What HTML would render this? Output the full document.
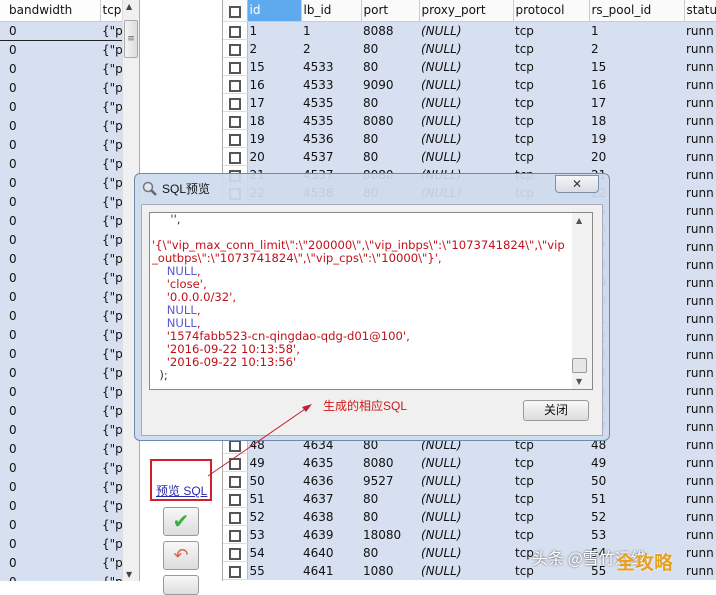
<!DOCTYPE html>
<html><head><meta charset="utf-8"><style>
*{margin:0;padding:0;box-sizing:border-box}
body{width:716px;height:581px;overflow:hidden;background:#fff;position:relative;font-family:"DejaVu Sans","Liberation Sans","Noto Sans CJK SC",sans-serif;font-size:12px;color:#111}
.abs{position:absolute}
table{border-collapse:collapse;table-layout:fixed}
td{height:18px;line-height:18px;white-space:nowrap;overflow:hidden;padding-left:2px}
#left{left:0;top:0;width:140px;height:581px;border-right:1px solid #aaa;overflow:hidden}
#left td{background:#d6e0f1;border-bottom:1px solid #d6e0f1}
#left .h td{background:#fdfdfd;border-bottom:1px solid #ccc;border-right:1px solid #ccc;height:21px}
#grid{left:223px;top:0}
#grid td{background:#d6e0f1}
#grid .h td{background:#fafafa;border-right:1px solid #ccc;border-bottom:1px solid #ccc;height:21px}
#grid td.cb{background:#fff;border-right:1px solid #bbb;border-bottom:1px solid #ddd;padding:0}
.box{display:block;width:12px;height:12px;border:2px solid #555;margin:3px 0 0 6px;background:#fff}
i{font-style:italic}
.code{font-family:"DejaVu Sans","Liberation Sans",sans-serif;font-size:11.6px;line-height:13px;color:#c0101a;white-space:pre}
.n{color:#5a5ad0}
.btn{border:1px solid #999;border-radius:3px;background:linear-gradient(#f8f8f8,#ddd)}
</style></head><body>

<div id="left" class="abs">
<table style="width:122px">
<colgroup><col style="width:100px"><col style="width:22px"></colgroup>
<tr class="h"><td style="padding-left:9px">bandwidth</td><td>tcp</td></tr>
<tr><td style="padding-left:9px;border-bottom:1px solid #222">0</td><td style="border-bottom:1px solid #222">{"p</td></tr>
<tr><td style="padding-left:9px">0</td><td>{"p</td></tr><tr><td style="padding-left:9px">0</td><td>{"p</td></tr><tr><td style="padding-left:9px">0</td><td>{"p</td></tr><tr><td style="padding-left:9px">0</td><td>{"p</td></tr><tr><td style="padding-left:9px">0</td><td>{"p</td></tr><tr><td style="padding-left:9px">0</td><td>{"p</td></tr><tr><td style="padding-left:9px">0</td><td>{"p</td></tr><tr><td style="padding-left:9px">0</td><td>{"p</td></tr><tr><td style="padding-left:9px">0</td><td>{"p</td></tr>
<tr><td style="padding-left:9px">0</td><td>{"p</td></tr><tr><td style="padding-left:9px">0</td><td>{"p</td></tr><tr><td style="padding-left:9px">0</td><td>{"p</td></tr><tr><td style="padding-left:9px">0</td><td>{"p</td></tr><tr><td style="padding-left:9px">0</td><td>{"p</td></tr><tr><td style="padding-left:9px">0</td><td>{"p</td></tr><tr><td style="padding-left:9px">0</td><td>{"p</td></tr><tr><td style="padding-left:9px">0</td><td>{"p</td></tr><tr><td style="padding-left:9px">0</td><td>{"p</td></tr><tr><td style="padding-left:9px">0</td><td>{"p</td></tr>
<tr><td style="padding-left:9px">0</td><td>{"p</td></tr><tr><td style="padding-left:9px">0</td><td>{"p</td></tr><tr><td style="padding-left:9px">0</td><td>{"p</td></tr><tr><td style="padding-left:9px">0</td><td>{"p</td></tr><tr><td style="padding-left:9px">0</td><td>{"p</td></tr><tr><td style="padding-left:9px">0</td><td>{"p</td></tr><tr><td style="padding-left:9px">0</td><td>{"p</td></tr><tr><td style="padding-left:9px">0</td><td>{"p</td></tr><tr><td style="padding-left:9px">0</td><td>{"p</td></tr><tr><td style="padding-left:9px">0</td><td>{"p</td></tr>
</table>
<div class="abs" style="left:122px;top:0;width:17px;height:581px;background:#f0f0f0;border-left:1px solid #ddd"></div>
<div class="abs" style="left:126px;top:2px;font-size:8px;color:#444">▲</div>
<div class="abs" style="left:124px;top:20px;width:14px;height:38px;background:linear-gradient(90deg,#f4f4f4,#ddd);border:1px solid #aaa;border-radius:2px;font-size:9px;text-align:center;line-height:36px;color:#666">≡</div>
<div class="abs" style="left:126px;top:570px;font-size:8px;color:#444">▼</div>
</div>

<div class="abs" style="left:222px;top:0;width:1px;height:581px;background:#aaa"></div>

<table id="grid" class="abs" style="width:500px">
<colgroup><col style="width:24px"><col style="width:54px"><col style="width:60px"><col style="width:58px"><col style="width:94px"><col style="width:76px"><col style="width:95px"><col style="width:40px"></colgroup>
<tr class="h"><td class="cb" style="background:#fafafa"><span class="box"></span></td><td style="background:#5fa9ef;color:#fff">id</td><td>lb_id</td><td>port</td><td>proxy_port</td><td>protocol</td><td>rs_pool_id</td><td>statu</td></tr>
<tr><td class="cb"><span class="box"></span></td><td>1</td><td>1</td><td>8088</td><td><i>(NULL)</i></td><td>tcp</td><td>1</td><td>runn</td></tr>
<tr><td class="cb"><span class="box"></span></td><td>2</td><td>2</td><td>80</td><td><i>(NULL)</i></td><td>tcp</td><td>2</td><td>runn</td></tr>
<tr><td class="cb"><span class="box"></span></td><td>15</td><td>4533</td><td>80</td><td><i>(NULL)</i></td><td>tcp</td><td>15</td><td>runn</td></tr>
<tr><td class="cb"><span class="box"></span></td><td>16</td><td>4533</td><td>9090</td><td><i>(NULL)</i></td><td>tcp</td><td>16</td><td>runn</td></tr>
<tr><td class="cb"><span class="box"></span></td><td>17</td><td>4535</td><td>80</td><td><i>(NULL)</i></td><td>tcp</td><td>17</td><td>runn</td></tr>
<tr><td class="cb"><span class="box"></span></td><td>18</td><td>4535</td><td>8080</td><td><i>(NULL)</i></td><td>tcp</td><td>18</td><td>runn</td></tr>
<tr><td class="cb"><span class="box"></span></td><td>19</td><td>4536</td><td>80</td><td><i>(NULL)</i></td><td>tcp</td><td>19</td><td>runn</td></tr>
<tr><td class="cb"><span class="box"></span></td><td>20</td><td>4537</td><td>80</td><td><i>(NULL)</i></td><td>tcp</td><td>20</td><td>runn</td></tr>
<tr><td class="cb"><span class="box"></span></td><td>21</td><td>4537</td><td>8080</td><td><i>(NULL)</i></td><td>tcp</td><td>21</td><td>runn</td></tr>
<tr><td class="cb"><span class="box"></span></td><td>22</td><td>4538</td><td>80</td><td><i>(NULL)</i></td><td>tcp</td><td>22</td><td>runn</td></tr>
<tr><td class="cb"><span class="box"></span></td><td>35</td><td>4621</td><td>80</td><td><i>(NULL)</i></td><td>tcp</td><td>35</td><td>runn</td></tr>
<tr><td class="cb"><span class="box"></span></td><td>36</td><td>4622</td><td>80</td><td><i>(NULL)</i></td><td>tcp</td><td>36</td><td>runn</td></tr>
<tr><td class="cb"><span class="box"></span></td><td>37</td><td>4623</td><td>80</td><td><i>(NULL)</i></td><td>tcp</td><td>37</td><td>runn</td></tr>
<tr><td class="cb"><span class="box"></span></td><td>38</td><td>4624</td><td>80</td><td><i>(NULL)</i></td><td>tcp</td><td>38</td><td>runn</td></tr>
<tr><td class="cb"><span class="box"></span></td><td>39</td><td>4625</td><td>80</td><td><i>(NULL)</i></td><td>tcp</td><td>39</td><td>runn</td></tr>
<tr><td class="cb"><span class="box"></span></td><td>40</td><td>4626</td><td>80</td><td><i>(NULL)</i></td><td>tcp</td><td>40</td><td>runn</td></tr>
<tr><td class="cb"><span class="box"></span></td><td>41</td><td>4627</td><td>80</td><td><i>(NULL)</i></td><td>tcp</td><td>41</td><td>runn</td></tr>
<tr><td class="cb"><span class="box"></span></td><td>42</td><td>4628</td><td>80</td><td><i>(NULL)</i></td><td>tcp</td><td>42</td><td>runn</td></tr>
<tr><td class="cb"><span class="box"></span></td><td>43</td><td>4629</td><td>80</td><td><i>(NULL)</i></td><td>tcp</td><td>43</td><td>runn</td></tr>
<tr><td class="cb"><span class="box"></span></td><td>44</td><td>4630</td><td>80</td><td><i>(NULL)</i></td><td>tcp</td><td>44</td><td>runn</td></tr>
<tr><td class="cb"><span class="box"></span></td><td>45</td><td>4631</td><td>80</td><td><i>(NULL)</i></td><td>tcp</td><td>45</td><td>runn</td></tr>
<tr><td class="cb"><span class="box"></span></td><td>46</td><td>4632</td><td>80</td><td><i>(NULL)</i></td><td>tcp</td><td>46</td><td>runn</td></tr>
<tr><td class="cb"><span class="box"></span></td><td>47</td><td>4633</td><td>80</td><td><i>(NULL)</i></td><td>tcp</td><td>47</td><td>runn</td></tr>
<tr><td class="cb"><span class="box"></span></td><td>48</td><td>4634</td><td>80</td><td><i>(NULL)</i></td><td>tcp</td><td>48</td><td>runn</td></tr>
<tr><td class="cb"><span class="box"></span></td><td>49</td><td>4635</td><td>8080</td><td><i>(NULL)</i></td><td>tcp</td><td>49</td><td>runn</td></tr>
<tr><td class="cb"><span class="box"></span></td><td>50</td><td>4636</td><td>9527</td><td><i>(NULL)</i></td><td>tcp</td><td>50</td><td>runn</td></tr>
<tr><td class="cb"><span class="box"></span></td><td>51</td><td>4637</td><td>80</td><td><i>(NULL)</i></td><td>tcp</td><td>51</td><td>runn</td></tr>
<tr><td class="cb"><span class="box"></span></td><td>52</td><td>4638</td><td>80</td><td><i>(NULL)</i></td><td>tcp</td><td>52</td><td>runn</td></tr>
<tr><td class="cb"><span class="box"></span></td><td>53</td><td>4639</td><td>18080</td><td><i>(NULL)</i></td><td>tcp</td><td>53</td><td>runn</td></tr>
<tr><td class="cb"><span class="box"></span></td><td>54</td><td>4640</td><td>80</td><td><i>(NULL)</i></td><td>tcp</td><td>54</td><td>runn</td></tr>
<tr><td class="cb"><span class="box"></span></td><td>55</td><td>4641</td><td>1080</td><td><i>(NULL)</i></td><td>tcp</td><td>55</td><td>runn</td></tr>
</table>

<!-- left toolbar -->
<div class="abs" style="left:150px;top:459px;width:62px;height:42px;border:2px solid #d0202a"></div>
<div class="abs" style="left:156px;top:482px;color:#2a2ab0;text-decoration:underline;font-family:'Liberation Sans','Noto Sans CJK SC',sans-serif;font-size:12px">预览 SQL</div>
<div class="abs btn" style="left:163px;top:507px;width:36px;height:29px;color:#3cae3c;font-size:20px;text-align:center;line-height:27px">✔</div>
<div class="abs btn" style="left:163px;top:541px;width:36px;height:29px;color:#e06040;font-size:18px;text-align:center;line-height:27px">↶</div>
<div class="abs btn" style="left:163px;top:575px;width:36px;height:20px"></div>

<!-- dialog -->
<div class="abs" style="left:134px;top:173px;width:476px;height:268px;background:rgba(205,220,238,0.93);border:1px solid #6f8aa8;border-radius:6px"></div>
<svg class="abs" style="left:141px;top:180px" width="18" height="18"><circle cx="7" cy="7" r="4.5" fill="#dfe8f2" stroke="#777" stroke-width="1.5"/><line x1="10" y1="10" x2="15" y2="15" stroke="#666" stroke-width="2.5"/></svg>
<div class="abs" style="left:162px;top:180px;font-family:'Liberation Sans','Noto Sans CJK SC',sans-serif;font-size:12px">SQL预览</div>
<div class="abs" style="left:555px;top:175px;width:44px;height:18px;border:1px solid #7d8fa6;border-radius:0 0 4px 4px;background:linear-gradient(#f4f6f9,#d7dde6);text-align:center;font-size:12px;line-height:16px;color:#333">✕</div>
<div class="abs" style="left:141px;top:204px;width:462px;height:232px;background:#f0f0f0;border:1px solid #aab"></div>
<div class="abs" style="left:149px;top:212px;width:444px;height:178px;background:#fff;border:1px solid #888"></div>
<div class="abs" style="left:572px;top:213px;width:20px;height:176px;background:#f2f2f2"></div>
<div class="abs" style="left:576px;top:216px;font-size:8px;color:#555">▲</div>
<div class="abs" style="left:576px;top:377px;font-size:8px;color:#555">▼</div>
<div class="abs" style="left:572px;top:358px;width:15px;height:15px;border:1px solid #999;border-radius:2px;background:#e6e6e6"></div>
<div class="abs code" style="left:152px;top:213px"><span style="color:#333">     '',</span>

'{\"vip_max_conn_limit\":\"200000\",\"vip_inbps\":\"1073741824\",\"vip
_outbps\":\"1073741824\",\"vip_cps\":\"10000\"}',
    <span class="n">NULL</span>,
    'close',
    '0.0.0.0/32',
    <span class="n">NULL</span>,
    <span class="n">NULL</span>,
    '1574fabb523-cn-qingdao-qdg-d01@100',
    '2016-09-22 10:13:58',
    '2016-09-22 10:13:56'
  <span style="color:#333">);</span></div>
<div class="abs btn" style="left:523px;top:400px;width:66px;height:21px;text-align:center;line-height:19px;font-family:'Liberation Sans','Noto Sans CJK SC',sans-serif;font-size:12px">关闭</div>
<div class="abs" style="left:323px;top:397px;color:#d01818;font-family:'Liberation Sans','Noto Sans CJK SC',sans-serif;font-size:12px">生成的相应SQL</div>
<svg class="abs" style="left:0;top:0" width="716" height="581"><line x1="208" y1="476" x2="308" y2="407" stroke="#c02030" stroke-width="1"/><polygon points="312,404 302,407 306,412" fill="#c02030"/></svg>

<div class="abs" style="left:532px;top:545px;color:#fff;font-family:'Noto Sans CJK SC',sans-serif;font-size:16px;text-shadow:0 0 2px #444">头条 @雪竹运维</div>
<div class="abs" style="left:616px;top:548px;color:#e8a020;font-family:'Noto Sans CJK SC',sans-serif;font-size:19px;font-weight:bold;text-shadow:0 0 2px #fff">全攻略</div>
</body></html>
